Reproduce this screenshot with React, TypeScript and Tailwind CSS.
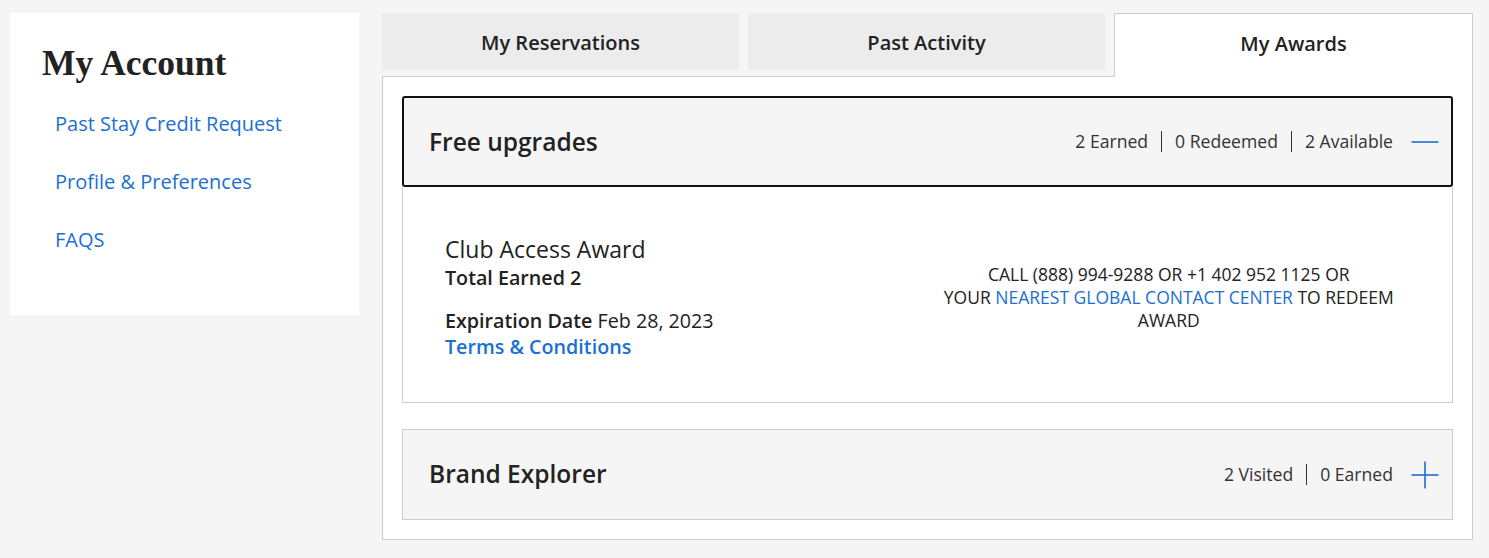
const sans = { fontFamily: '"Open Sans", "Noto Sans", sans-serif' };

function Stat({ items }: { items: string[] }) {
  return (
    <div className="flex items-center text-[17.6px] text-[#333]">
      {items.map((item, i) => (
        <div key={item} className="flex items-center">
          {i > 0 && <span className="mx-[13px] h-[21px] w-px bg-[#333]" />}
          <span>{item}</span>
        </div>
      ))}
    </div>
  );
}

function ToggleIcon({ open }: { open: boolean }) {
  return (
    <svg width="28" height="28" viewBox="0 0 28 28" className="text-[#1b6fd3]">
      <line x1="0.5" y1="14" x2="27.5" y2="14" stroke="currentColor" strokeWidth="1.6" />
      {!open && <line x1="14" y1="0.5" x2="14" y2="27.5" stroke="currentColor" strokeWidth="1.6" />}
    </svg>
  );
}

function Sidebar() {
  const links = ["Past Stay Credit Request", "Profile & Preferences", "FAQS"];
  return (
    <aside className="w-[349px] h-[302px] bg-white shrink-0 pt-[33px] pl-[32px]">
      <h1
        className="text-[35.5px] font-bold leading-none text-[#222]"
        style={{ fontFamily: '"Liberation Serif", "DejaVu Serif", serif' }}
      >
        My Account
      </h1>
      <ul className="mt-[28px] pl-[13px] flex flex-col gap-[30px]">
        {links.map((l) => (
          <li key={l}>
            <a href="#" className="text-[20px] leading-[28px] text-[#1b6fd3]">
              {l}
            </a>
          </li>
        ))}
      </ul>
    </aside>
  );
}

function Tabs() {
  return (
    <div className="flex items-start gap-[9px] h-[64px]">
      <button className="w-[357px] h-[57px] bg-[#ececec] text-[20px] font-semibold text-[#222] pt-[2px]">
        My Reservations
      </button>
      <button className="w-[357px] h-[57px] bg-[#ececec] text-[20px] font-semibold text-[#222] pt-[2px]">
        Past Activity
      </button>
      <button className="relative z-10 w-[359px] h-[64px] bg-white border border-b-0 border-[#ccc] text-[20px] font-semibold text-[#222] pb-[3px]">
        My Awards
      </button>
    </div>
  );
}

export default function App() {
  return (
    <div className="min-h-screen bg-[#f5f5f5] flex gap-[23px] pl-[10px] pt-[13px] pr-[16px] text-[#222]" style={sans}>
      <Sidebar />
      <main className="w-[1091px]">
        <Tabs />
        <section className="-mt-px bg-white border border-[#ccc] p-[19px]">
          <div className="h-[91px] bg-[#f5f5f5] border-2 border-[#111] rounded-[3px] flex items-center justify-between pl-[25px] pr-[12px]">
            <h2 className="text-[24.5px] font-semibold pt-[2px]">Free upgrades</h2>
            <div className="flex items-center gap-[18px]">
              <Stat items={["2 Earned", "0 Redeemed", "2 Available"]} />
              <ToggleIcon open />
            </div>
          </div>
          <div className="h-[216px] border border-t-0 border-[#ccc] grid grid-cols-2 items-center px-[42px]">
            <div className="pt-[4px]">
              <p className="text-[23px] leading-[30px]">Club Access Award</p>
              <p className="text-[19.7px] leading-[28px] font-semibold">Total Earned 2</p>
              <p className="mt-[15px] text-[19.7px] leading-[27px]">
                <span className="font-semibold">Expiration Date</span> Feb 28, 2023
              </p>
              <a href="#" className="text-[19.7px] leading-[25px] font-semibold text-[#1b6fd3]">
                Terms &amp; Conditions
              </a>
            </div>
            <p className="pt-[5px] text-center text-[17.5px] leading-[23px] uppercase text-[#222]">
              <span>CALL (888) 994-9288 OR +1 402 952 1125 OR</span>
              <br />
              <span>YOUR </span>
              <a href="#" className="text-[#1b6fd3]">
                NEAREST GLOBAL CONTACT CENTER
              </a>
              <span> TO REDEEM</span>
              <br />
              <span>AWARD</span>
            </p>
          </div>
          <div className="mt-[26px] h-[91px] bg-[#f5f5f5] border border-[#ccc] flex items-center justify-between pl-[26px] pr-[13px]">
            <h2 className="text-[24.5px] font-semibold">Brand Explorer</h2>
            <div className="flex items-center gap-[18px]">
              <Stat items={["2 Visited", "0 Earned"]} />
              <ToggleIcon open={false} />
            </div>
          </div>
        </section>
      </main>
    </div>
  );
}
